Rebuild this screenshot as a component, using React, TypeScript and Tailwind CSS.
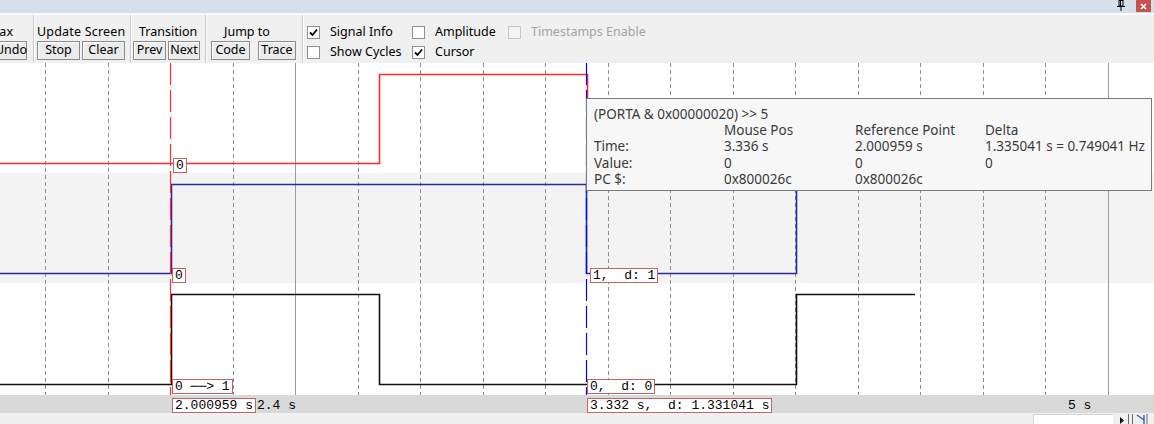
import React from "react";

// value labels that sit on the wave canvas
function ValueBox({ text, className }: { text: string; className: string }) {
  return (
    <div
      className={`absolute h-[15px] px-[2px] border border-[#c26464] bg-white text-[13px] leading-[13px] text-black whitespace-pre font-['Liberation_Mono',monospace] ${className}`}
    >
      {text}
    </div>
  );
}

function Btn({ label, w }: { label: string; w: string }) {
  return (
    <div
      className={`${w} h-[19px] shrink-0 border border-[#8a8a8a] bg-[#ebebeb] shadow-[inset_1px_1px_0_#ffffff] flex items-center justify-center leading-none text-black text-[12.5px]`}
    >
      {label}
    </div>
  );
}

function Sep() {
  return <div className="w-[2px] h-full shrink-0 border-l border-[#c9c9c9] bg-white" />;
}

function Check({ label, checked = false, disabled = false }: { label: string; checked?: boolean; disabled?: boolean }) {
  return (
    <div className="flex items-center h-[20px]">
      <span
        className={`w-[13px] h-[13px] shrink-0 border flex items-center justify-center ${
          disabled ? "border-[#c6c6c6] bg-[#f4f4f4]" : "border-[#8e8f8f] bg-white"
        }`}
      >
        {checked && (
          <svg width="11" height="11" viewBox="0 0 11 11">
            <path d="M2 5.5 L4.5 8 L9 2.5" fill="none" stroke="#000" strokeWidth="1.8" />
          </svg>
        )}
      </span>
      <span className={`ml-[10px] whitespace-nowrap ${disabled ? "text-[#a3a3a3]" : "text-black"}`}>{label}</span>
    </div>
  );
}

const gridXs = Array.from({ length: 18 }, (_, i) => Math.floor(45.5 + 62.5 * i) + 0.5);

function Waves() {
  return (
    <svg className="absolute inset-0" width="1154" height="332" viewBox="0 0 1154 332">
      {gridXs.map((x, i) =>
        i === 2 ? null : i === 4 || i === 17 ? (
          <line key={i} x1={x} y1={0} x2={x} y2={332} stroke="#9c9c9c" strokeWidth="1" />
        ) : (
          <line key={i} x1={x} y1={0} x2={x} y2={332} stroke="#8c8c8c" strokeWidth="1" strokeDasharray="4 3" />
        )
      )}
      <path d="M0 100.5 H379.5 V11.5 H587.5 V100.5 H915" fill="none" stroke="#ff2a2a" strokeWidth="1.6" />
      <path d="M0 210.5 H171.5 V121.5 H586.5 V210.5 H796.5 V121.5 H915" fill="none" stroke="#2b2b9c" strokeWidth="1.6" />
      <path d="M0 321.5 H171.5 V231.5 H379.5 V321.5 H796.5 V231.5 H915" fill="none" stroke="#111111" strokeWidth="1.6" />
      <line x1={170.5} y1={0} x2={170.5} y2={332} stroke="#ff3030" strokeWidth="1.2" strokeDasharray="22 5" />
      <line x1={586.5} y1={0} x2={586.5} y2={332} stroke="#0000ff" strokeWidth="1.2" strokeDasharray="22 5" />
    </svg>
  );
}

export default function App() {
  return (
    <div className="w-[1154px] h-[424px] overflow-hidden bg-[#f0f0f0] flex flex-col font-['Noto_Sans',sans-serif] text-[12px] text-black">
      {/* title strip */}
      <div className="h-[15px] shrink-0 border-b-2 border-[#fbfbfb] bg-[#d6e0eb] flex justify-end items-start pr-[3px]">
        <svg className="mr-[11px]" width="8" height="11" viewBox="0 0 8 11">
          <rect x="2" y="0.5" width="4" height="5.5" fill="none" stroke="#000" />
          <rect x="3" y="1" width="1" height="5" fill="#000" />
          <line x1="0" y1="6.5" x2="8" y2="6.5" stroke="#000" />
          <line x1="4" y1="6.5" x2="4" y2="11" stroke="#000" />
        </svg>
        <div className="w-[15px] h-[12px] bg-[#c75050] flex items-center justify-center">
          <svg width="7" height="7" viewBox="0 0 7 7">
            <path d="M1 1 L6 6 M6 1 L1 6" stroke="#fff" strokeWidth="1.6" />
          </svg>
        </div>
      </div>

      {/* toolbar */}
      <div className="h-[48px] shrink-0 flex">
        <div className="w-[33px] shrink-0 overflow-hidden flex flex-col items-end">
          <div className="h-[26px] pt-[9px] leading-[16px] mr-[20px] whitespace-nowrap text-[12.5px]">Max</div>
          <div className="flex mr-[6px]">
            <Btn label="Undo" w="w-[32px]" />
          </div>
        </div>
        <Sep />
        <div className="w-[95px] shrink-0 flex flex-col">
          <div className="h-[26px] pt-[9px] leading-[16px] pl-[2px] whitespace-nowrap text-[12.5px] tracking-[0.2px]">Update Screen</div>
          <div className="flex gap-[2px] pl-[2px]">
            <Btn label="Stop" w="w-[43px]" />
            <Btn label="Clear" w="w-[43px]" />
          </div>
        </div>
        <Sep />
        <div className="w-[73px] shrink-0 flex flex-col">
          <div className="h-[26px] pt-[9px] leading-[16px] pl-[7px] whitespace-nowrap text-[12.5px]">Transition</div>
          <div className="flex gap-[2px] pl-[1px]">
            <Btn label="Prev" w="w-[33px]" />
            <Btn label="Next" w="w-[32px]" />
          </div>
        </div>
        <Sep />
        <div className="w-[95px] shrink-0 flex flex-col">
          <div className="h-[26px] pt-[9px] leading-[16px] pl-[17px] whitespace-nowrap text-[12.5px]">Jump to</div>
          <div className="flex gap-[8px] pl-[4px]">
            <Btn label="Code" w="w-[39px]" />
            <Btn label="Trace" w="w-[38px]" />
          </div>
        </div>
        <Sep />
        <div className="pl-[3px] pt-[7px] grid grid-cols-[105px_96px_auto] content-start text-[12.5px]">
          <Check label="Signal Info" checked />
          <Check label="Amplitude" />
          <Check label="Timestamps Enable" disabled />
          <Check label="Show Cycles" />
          <Check label="Cursor" checked />
        </div>
      </div>

      {/* wave canvas */}
      <div className="relative h-[332px] shrink-0 flex flex-col">
        <div className="h-[110px] bg-white" />
        <div className="h-[110px] bg-[#f3f3f3]" />
        <div className="flex-1 bg-white" />
        <Waves />
        <ValueBox text="0" className="left-[173px] top-[95px]" />
        <ValueBox text="0" className="left-[172px] top-[205px]" />
        <ValueBox text="0 ──> 1" className="left-[172px] top-[316px]" />
        <ValueBox text="1,  d: 1" className="left-[590px] top-[205px]" />
        <ValueBox text="0,  d: 0" className="left-[587px] top-[316px]" />

        {/* signal info tooltip */}
        <div className="absolute left-[586px] top-[35px] w-[566px] h-[93px] border border-[#7a7a7a] bg-[#f7f7f7] pl-[7px] pt-[7px] text-[13.5px] text-[#3a3a3a] leading-[16.2px] grid grid-cols-[130px_131px_130px_1fr] content-start whitespace-nowrap">
          <div className="col-span-4">(PORTA &amp; 0x00000020) &gt;&gt; 5</div>
          <div />
          <div>Mouse Pos</div>
          <div>Reference Point</div>
          <div>Delta</div>
          <div>Time:</div>
          <div>3.336 s</div>
          <div>2.000959 s</div>
          <div>1.335041 s = 0.749041 Hz</div>
          <div>Value:</div>
          <div>0</div>
          <div>0</div>
          <div>0</div>
          <div>PC $:</div>
          <div>0x800026c</div>
          <div>0x800026c</div>
          <div />
        </div>
      </div>

      {/* time axis */}
      <div className="relative h-[18px] shrink-0 bg-[#d9d9d9] font-['Liberation_Mono',monospace] text-[13px] leading-[13px]">
        <ValueBox text="2.000959 s" className="left-[172px] top-[3px]" />
        <span className="absolute left-[257px] top-[4px] whitespace-pre">2.4 s</span>
        <ValueBox text="3.332 s,  d: 1.331041 s" className="left-[587px] top-[3px]" />
        <span className="absolute left-[1068px] top-[4px] whitespace-pre">5 s</span>
      </div>

      {/* scroll strip */}
      <div className="flex-1 flex justify-end">
        <div className="w-[80px] mt-[1px] border-l border-t border-[#d4d4d4] bg-white" />
        <div className="w-[41px] flex items-end pl-[6px] gap-[3px]">
          <svg width="6" height="7" viewBox="0 0 6 7">
            <path d="M1 0 L5 3.5 L1 7 Z" fill="#111" />
          </svg>
          <div className="w-[5px] h-[10px] border-x border-[#6c6c6c]" />
          <svg width="12" height="10" viewBox="0 0 12 10">
            <path d="M1 1 L8 6 M8 1 V10" stroke="#3465a4" strokeWidth="1.4" fill="none" />
            <path d="M11 0 V10" stroke="#6c6c6c" />
          </svg>
        </div>
      </div>
    </div>
  );
}
